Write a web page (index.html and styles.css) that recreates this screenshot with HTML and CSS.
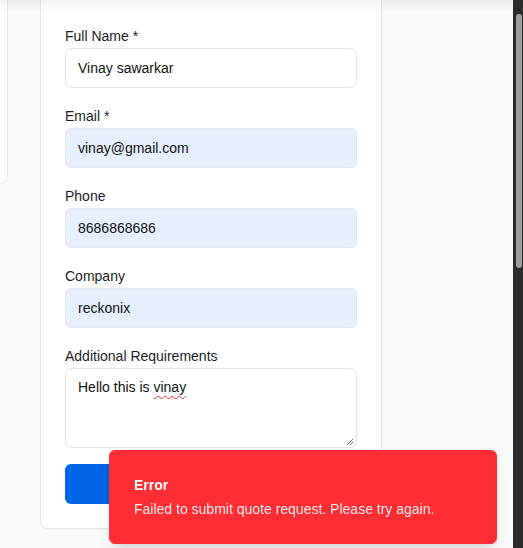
FILE: index.html
```html
<!DOCTYPE html>
<html lang="en">
<head>
<meta charset="utf-8">
<title>Request a Quote</title>
<link rel="stylesheet" href="styles.css">
</head>
<body>
<div class="app">
  <main class="page">
    <div class="layout">
      <aside class="side-card"></aside>
      <section class="quote-card">
        <h2 class="quote-title">Request a Quote</h2>
        <form class="quote-form">
          <div class="fields">
            <div class="field">
              <label class="field-label">Full Name *</label>
              <div class="field-input">Vinay sawarkar</div>
            </div>
            <div class="field">
              <label class="field-label">Email *</label>
              <div class="field-input autofill">vinay@gmail.com</div>
            </div>
            <div class="field">
              <label class="field-label">Phone</label>
              <div class="field-input autofill">8686868686</div>
            </div>
            <div class="field">
              <label class="field-label">Company</label>
              <div class="field-input autofill">reckonix</div>
            </div>
            <div class="field">
              <label class="field-label">Additional Requirements</label>
              <div class="field-textarea">
                <span class="textarea-text">Hello this is <span class="misspelled">vinay</span></span>
                <svg class="grip" width="8" height="8" viewBox="0 0 8 8"><path d="M7 1 L1 7 M7 4 L4 7" stroke="#6b6b6b" stroke-width="1" fill="none"/></svg>
              </div>
            </div>
          </div>
          <button type="button" class="submit-btn">Submit Quote Request</button>
        </form>
      </section>
    </div>
  </main>
  <div class="scrollbar"><div class="thumb"></div></div>
</div>
<div class="top-shade"></div>
<div class="toast" role="alert">
  <div class="toast-title">Error</div>
  <div class="toast-desc">Failed to submit quote request. Please try again.</div>
</div>
</body>
</html>
```
FILE: styles.css
```css
html, body {
  margin: 0;
  padding: 0;
  height: 548px;
  overflow: hidden;
}
body {
  font-family: "Liberation Sans", Arial, sans-serif;
  color: #18181b;
}
.app {
  display: flex;
  height: 548px;
}
.page {
  flex: 1;
  background: #f8f9fb;
  overflow: hidden;
}
.layout {
  display: grid;
  grid-template-columns: 8px 342px;
  column-gap: 32px;
  align-items: start;
  margin-top: -49px;
}
.side-card {
  height: 233px;
  background: #ffffff;
  border: 1px solid #e5e7eb;
  border-left: none;
  border-radius: 0 8px 8px 0;
  box-sizing: border-box;
}
.quote-card {
  background: #ffffff;
  border: 1px solid #e5e7eb;
  border-radius: 8px;
  padding: 24px;
  box-shadow: 0 1px 2px rgba(0,0,0,0.04);
}
.quote-title {
  margin: 0 0 30px;
  font-size: 20px;
  line-height: 22px;
  font-weight: 700;
  color: #111827;
}
.quote-form {
  display: flex;
  flex-direction: column;
}
.fields {
  display: flex;
  flex-direction: column;
  gap: 20px;
}
.field {
  display: flex;
  flex-direction: column;
}
.field-label {
  font-size: 14px;
  line-height: 16px;
  margin-bottom: 4px;
  color: #1c1c1f;
}
.field-input {
  height: 40px;
  box-sizing: border-box;
  border: 1px solid #e6e3e6;
  border-radius: 6px;
  padding: 0 12px;
  display: flex;
  align-items: center;
  font-size: 14px;
  color: #111111;
  background: #ffffff;
}
.field-input.autofill {
  background: #e6effd;
  border-color: #e1e4ea;
}
.field-textarea {
  height: 80px;
  box-sizing: border-box;
  border: 1px solid #e6e3e6;
  border-radius: 6px;
  padding: 8px 12px;
  display: flex;
  flex-direction: column;
  justify-content: space-between;
  font-size: 14px;
  line-height: 20px;
  color: #111111;
  background: #ffffff;
}
.misspelled {
  text-decoration: underline wavy #e03030;
  text-decoration-thickness: 1px;
  text-underline-offset: 3px;
}
.grip {
  align-self: flex-end;
  margin-right: -10px;
  margin-bottom: -7px;
}
.submit-btn {
  margin-top: 16px;
  height: 40px;
  border: none;
  border-radius: 6px;
  background: #0066e6;
  color: #ffffff;
  font-family: "Liberation Sans", Arial, sans-serif;
  font-size: 14px;
  font-weight: 700;
}
.scrollbar {
  width: 10px;
  background: #2b2b2b;
  display: flex;
  flex-direction: column;
}
.thumb {
  margin: 14px 1px 0 3px;
  height: 254px;
  background: #9f9f9f;
  border-radius: 3px;
}
.top-shade {
  position: fixed;
  top: 0;
  left: 0;
  width: 513px;
  height: 12px;
  background: linear-gradient(rgba(0,0,0,0.05), rgba(0,0,0,0));
  pointer-events: none;
}
.toast {
  position: fixed;
  right: 26px;
  bottom: 4px;
  width: 388px;
  box-sizing: border-box;
  padding: 24px 32px 24px 24px;
  background: #ff2e35;
  border: 1px solid #ff2e35;
  border-radius: 6px;
  color: #ffffff;
  display: flex;
  flex-direction: column;
  gap: 4px;
  box-shadow: 0 10px 15px -3px rgba(0,0,0,0.1), 0 4px 6px -4px rgba(0,0,0,0.1);
}
.toast-title {
  font-size: 14px;
  line-height: 20px;
  font-weight: 700;
}
.toast-desc {
  font-size: 14px;
  line-height: 20px;
  opacity: 0.9;
}
```
